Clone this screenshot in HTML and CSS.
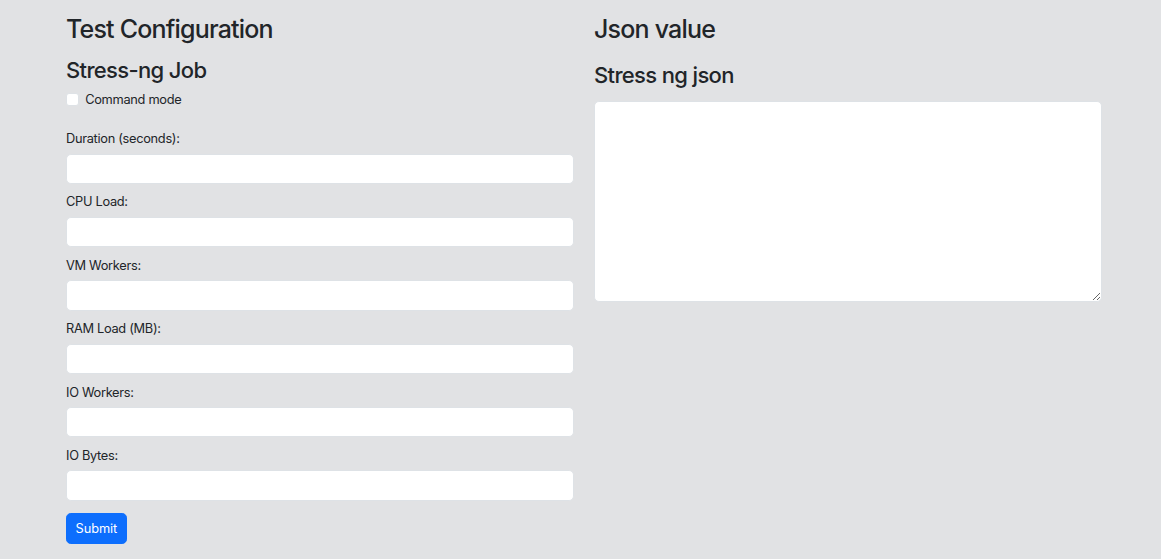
FILE: index.html
```html
<!DOCTYPE html>
<html lang="en">
<head>
<meta charset="utf-8">
<title>Test Configuration</title>
<link rel="stylesheet" href="styles.css">
</head>
<body>
<div class="container">
  <div class="row">
    <div class="col">
      <h2 class="title">Test Configuration</h2>
      <h3 class="subtitle">Stress-ng Job</h3>
      <form class="form">
        <div class="form-check">
          <input type="checkbox" class="check-input" id="cmd">
          <label for="cmd" class="check-label">Command mode</label>
        </div>
        <div class="group">
          <label class="label" for="duration">Duration (seconds):</label>
          <input class="control" id="duration" type="text">
        </div>
        <div class="group">
          <label class="label" for="cpu">CPU Load:</label>
          <input class="control" id="cpu" type="text">
        </div>
        <div class="group">
          <label class="label" for="vm">VM Workers:</label>
          <input class="control" id="vm" type="text">
        </div>
        <div class="group">
          <label class="label" for="ram">RAM Load (MB):</label>
          <input class="control" id="ram" type="text">
        </div>
        <div class="group">
          <label class="label" for="io">IO Workers:</label>
          <input class="control" id="io" type="text">
        </div>
        <div class="group">
          <label class="label" for="iob">IO Bytes:</label>
          <input class="control" id="iob" type="text">
        </div>
        <button type="button" class="btn">Submit</button>
      </form>
    </div>
    <div class="col">
      <h2 class="title">Json value</h2>
      <h3 class="subtitle subtitle-json">Stress ng json</h3>
      <textarea class="json"></textarea>
    </div>
  </div>
</div>
</body>
</html>
```
FILE: styles.css
```css
* { box-sizing: border-box; }

html, body {
  margin: 0;
  padding: 0;
  background: #e1e2e4;
  color: #212529;
  font-family: Inter, "Liberation Sans", Arial, sans-serif;
  font-size: 12.8px;
  line-height: 1.5;
  letter-spacing: -0.3px;
}

.container {
  padding: 14px 0 0 66px;
}

.row {
  display: flex;
  gap: 20px;
}

.col {
  width: 508px;
  display: flex;
  flex-direction: column;
}

.title {
  margin: 0;
  font-size: 25px;
  font-weight: 500;
  line-height: 30.7px;
  letter-spacing: -0.8px;
}

.subtitle {
  margin: 12px 0 6.4px;
  font-size: 22px;
  font-weight: 500;
  line-height: 26.9px;
  letter-spacing: -0.65px;
}

.subtitle-json {
  margin: 17px 0 12px;
}

.form {
  display: flex;
  flex-direction: column;
}

.form-check {
  display: flex;
  align-items: flex-start;
  gap: 6.4px;
  min-height: 19.2px;
  margin-bottom: 19.8px;
}

.check-input {
  appearance: none;
  -webkit-appearance: none;
  width: 12.8px;
  height: 12.8px;
  margin: 3.2px 0 0 0;
  background: #fff;
  border: 1px solid #dee2e6;
  border-radius: 3px;
  flex: none;
}

.check-label {
  line-height: 19.2px;
}

.group {
  display: flex;
  flex-direction: column;
  margin-bottom: 8.5px;
}

.label {
  line-height: 19.2px;
  margin-bottom: 5.3px;
}

.control {
  display: block;
  width: 100%;
  height: 30.4px;
  padding: 4.8px 9.6px;
  font: inherit;
  color: #212529;
  background: #fff;
  border: 1px solid #dee2e6;
  border-radius: 4.8px;
  outline: none;
}

.btn {
  align-self: flex-start;
  margin-top: 4px;
  height: 30.4px;
  padding: 0 8.6px;
  font-family: Inter, "Liberation Sans", Arial, sans-serif;
  font-size: 12.8px;
  letter-spacing: -0.1px;
  color: #fff;
  background: #0d6efd;
  border: 1px solid #0d6efd;
  border-radius: 4.8px;
}

.json {
  display: block;
  width: 100%;
  height: 201px;
  padding: 4.8px 9.6px;
  font: inherit;
  background: #fff;
  border: 1px solid #dee2e6;
  border-radius: 4.8px;
  outline: none;
  resize: vertical;
}
```
